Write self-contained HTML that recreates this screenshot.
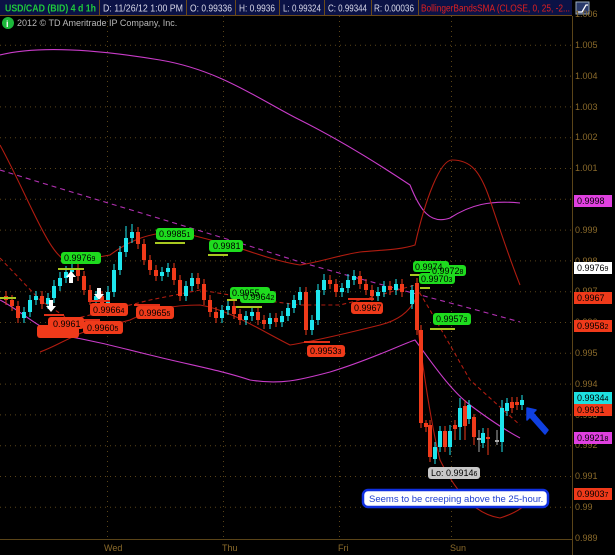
<!DOCTYPE html>
<html><head><meta charset="utf-8"><style>
html,body{margin:0;padding:0;background:#000;width:615px;height:555px;overflow:hidden}
svg{display:block;font-family:"Liberation Sans",sans-serif}
</style></head><body>
<svg width="615" height="555" xmlns="http://www.w3.org/2000/svg">
<rect width="615" height="555" fill="#000"/>
<rect x="0" y="0" width="572" height="15" fill="#0b1246"/>
<g stroke="#6b4a1a" stroke-width="1">
<line x1="99.5" y1="0" x2="99.5" y2="15"/><line x1="186.5" y1="0" x2="186.5" y2="15"/><line x1="235.5" y1="0" x2="235.5" y2="15"/><line x1="279.5" y1="0" x2="279.5" y2="15"/><line x1="324.5" y1="0" x2="324.5" y2="15"/><line x1="371.5" y1="0" x2="371.5" y2="15"/><line x1="418.5" y1="0" x2="418.5" y2="15"/>
<line x1="0" y1="15.5" x2="572" y2="15.5"/>
</g>
<g font-size="10" lengthAdjust="spacingAndGlyphs">
<text x="5" y="11.5" fill="#1ecb3c" font-weight="bold" textLength="91" lengthAdjust="spacingAndGlyphs">USD/CAD (BID) 4 d 1h</text>
<text x="103" y="11.5" fill="#d8d8e8" textLength="80" lengthAdjust="spacingAndGlyphs">D: 11/26/12 1:00 PM</text>
<text x="190" y="11.5" fill="#d8d8e8" textLength="42" lengthAdjust="spacingAndGlyphs">O: 0.99336</text>
<text x="239" y="11.5" fill="#d8d8e8" textLength="36" lengthAdjust="spacingAndGlyphs">H: 0.9936</text>
<text x="283" y="11.5" fill="#d8d8e8" textLength="38" lengthAdjust="spacingAndGlyphs">L: 0.99324</text>
<text x="328" y="11.5" fill="#d8d8e8" textLength="39" lengthAdjust="spacingAndGlyphs">C: 0.99344</text>
<text x="374" y="11.5" fill="#d8d8e8" textLength="40" lengthAdjust="spacingAndGlyphs">R: 0.00036</text>
<text x="421" y="11.5" fill="#e02020" textLength="149" lengthAdjust="spacingAndGlyphs">BollingerBandsSMA (CLOSE, 0, 25, -2...</text>
</g>
<rect x="576" y="2" width="13" height="12" fill="#2a3a6a" stroke="#9ab" stroke-width="1"/>
<path d="M578 12 L582 12 L586 5 L588 5" stroke="#fff" fill="none" stroke-width="1.3"/>
<circle cx="8" cy="23" r="6" fill="#1bb83a"/><text x="6" y="27" font-size="9" fill="#fff" font-weight="bold">i</text>
<text x="17" y="26" font-size="9" fill="#b8b8b8">2012 © TD Ameritrade IP Company, Inc.</text>
<g stroke="#5a4418" stroke-dasharray="1,4" stroke-width="1">
<line x1="0" y1="45.3" x2="572" y2="45.3"/><line x1="0" y1="76.1" x2="572" y2="76.1"/><line x1="0" y1="106.9" x2="572" y2="106.9"/><line x1="0" y1="137.7" x2="572" y2="137.7"/><line x1="0" y1="168.5" x2="572" y2="168.5"/><line x1="0" y1="199.3" x2="572" y2="199.3"/><line x1="0" y1="230.1" x2="572" y2="230.1"/><line x1="0" y1="260.9" x2="572" y2="260.9"/><line x1="0" y1="291.7" x2="572" y2="291.7"/><line x1="0" y1="322.5" x2="572" y2="322.5"/><line x1="0" y1="353.3" x2="572" y2="353.3"/><line x1="0" y1="384.1" x2="572" y2="384.1"/><line x1="0" y1="414.9" x2="572" y2="414.9"/><line x1="0" y1="445.7" x2="572" y2="445.7"/><line x1="0" y1="476.5" x2="572" y2="476.5"/><line x1="0" y1="507.3" x2="572" y2="507.3"/>
<line x1="107.5" y1="16" x2="107.5" y2="539"/><line x1="223.5" y1="16" x2="223.5" y2="539"/><line x1="339.5" y1="16" x2="339.5" y2="539"/><line x1="451.5" y1="16" x2="451.5" y2="539"/>
</g>
<g stroke="#5a4418" stroke-width="1">
<line x1="572.5" y1="16" x2="572.5" y2="555"/>
<line x1="0" y1="539.5" x2="572" y2="539.5"/>
</g>
<g font-size="9" fill="#8a6a2a">
<text x="575" y="17">1.006</text><text x="575" y="48">1.005</text><text x="575" y="79">1.004</text><text x="575" y="110">1.003</text><text x="575" y="140">1.002</text><text x="575" y="171">1.001</text><text x="575" y="202">1</text><text x="575" y="233">0.999</text><text x="575" y="264">0.998</text><text x="575" y="294">0.997</text><text x="575" y="325">0.996</text><text x="575" y="356">0.995</text><text x="575" y="387">0.994</text><text x="575" y="418">0.993</text><text x="575" y="448">0.992</text><text x="575" y="479">0.991</text><text x="575" y="510">0.99</text><text x="575" y="541">0.989</text>
<text x="104" y="551">Wed</text><text x="222" y="551">Thu</text><text x="338" y="551">Fri</text><text x="450" y="551">Sun</text>
</g>
<g fill="none" stroke-width="1.1">
<path d="M0,55 C40,45 100,50 160,60 C220,70 260,100 300,120 C340,140 380,165 410,185 C420,210 430,225 450,218 C470,205 490,200 520,203" stroke="#c93cc9"/>
<path d="M0,300 C20,310 40,330 60,335 C90,340 110,345 150,355 C190,365 220,370 250,380 C280,385 300,380 330,372 C370,360 400,345 415,340 C430,360 450,390 470,405 C490,420 505,430 520,438" stroke="#c93cc9"/>
<path d="M0,170 C80,195 200,230 300,262 C380,285 460,305 520,322" stroke="#b030b0" stroke-dasharray="5,4"/>
<path d="M0,145 C30,200 50,260 70,262 L110,255 C130,240 150,232 180,232 L230,245 C260,255 280,262 300,265 C320,262 340,255 360,252 C380,250 400,250 415,245 C425,200 440,160 452,160 C470,160 480,170 490,200 C500,230 510,260 520,285" stroke="#b01c10"/>
<path d="M40,352 C60,345 80,330 100,328 L130,320 C150,310 170,305 200,305 C230,310 260,330 290,345 C320,340 360,330 380,325 C400,320 410,310 415,300 C420,350 430,420 440,460 C460,500 480,515 500,518 C510,515 520,510 525,505" stroke="#b01c10"/>
<path d="M0,258 L40,300 L70,320 L110,310 L150,300 L200,290 L260,300 L300,305 L340,305 L380,295 L415,285 L430,310 L470,380 L520,425" stroke="#b01c10" stroke-dasharray="4,3"/>
</g>
<!-- wicks -->
<path fill="none" stroke="#1ee6ee" stroke-width="1" d="M24,307V323 M30,295V317 M36,291V305 M48,293V309 M54,280V303 M60,272V291 M66,266V283 M72,262V277 M96,291V305 M108,286V309 M114,264V297 M120,246V275 M126,226V257 M132,224V243 M162,267V281 M168,263V277 M186,281V301 M192,273V291 M222,305V323 M228,301V315 M246,311V325 M252,307V321 M270,313V329 M282,311V327 M288,303V321 M294,295V313 M300,287V305 M312,315V335 M318,284V325 M324,274V295 M342,283V297 M348,274V293 M354,270V285 M378,287V301 M384,281V297 M396,279V295 M412,285V309 M435,442V464 M440,426V452 M450,425V455 M460,398V440 M469,400V424 M483,428V448 M502,400V452 M507,398V416 M522,395V410"/>
<path fill="none" stroke="#f03a1a" stroke-width="1" d="M6,291V305 M12,295V311 M18,301V323 M42,291V309 M78,263V281 M84,271V295 M90,285V305 M102,291V309 M138,227V249 M144,239V265 M150,255V275 M156,265V281 M174,263V285 M180,275V301 M198,273V289 M204,279V305 M210,295V317 M216,307V323 M234,301V319 M240,309V325 M258,307V325 M264,315V329 M276,313V327 M306,287V335 M330,275V289 M336,279V297 M360,271V289 M366,279V295 M372,285V301 M390,281V295 M402,279V297 M417,278V335 M421,325V428 M426,420V432 M430,420V462 M445,426V452 M455,420V440 M465,400V440 M474,414V445 M488,428V455 M512,397V413 M517,397V410"/>
<path fill="none" stroke="#aaa" stroke-width="1" d="M479,430V452 M497,430V445"/>
<g fill="#1ee6ee">
<rect x="22" y="312" width="4" height="6"/><rect x="28" y="300" width="4" height="12"/><rect x="34" y="296" width="4" height="4"/><rect x="46" y="298" width="4" height="6"/><rect x="52" y="286" width="4" height="12"/><rect x="58" y="278" width="4" height="8"/><rect x="64" y="272" width="4" height="6"/><rect x="70" y="268" width="4" height="4"/><rect x="94" y="296" width="4" height="4"/><rect x="106" y="292" width="4" height="12"/><rect x="112" y="270" width="4" height="22"/><rect x="118" y="252" width="4" height="18"/><rect x="124" y="238" width="4" height="14"/><rect x="130" y="232" width="4" height="6"/><rect x="160" y="272" width="4" height="4"/><rect x="166" y="268" width="4" height="4"/><rect x="184" y="286" width="4" height="10"/><rect x="190" y="278" width="4" height="8"/><rect x="220" y="310" width="4" height="8"/><rect x="226" y="306" width="4" height="4"/><rect x="244" y="316" width="4" height="4"/><rect x="250" y="312" width="4" height="4"/><rect x="268" y="318" width="4" height="6"/><rect x="280" y="316" width="4" height="6"/><rect x="286" y="308" width="4" height="8"/><rect x="292" y="300" width="4" height="8"/><rect x="298" y="292" width="4" height="8"/><rect x="310" y="320" width="4" height="10"/><rect x="316" y="290" width="4" height="30"/><rect x="322" y="280" width="4" height="10"/><rect x="340" y="288" width="4" height="4"/><rect x="346" y="280" width="4" height="8"/><rect x="352" y="276" width="4" height="4"/><rect x="376" y="292" width="4" height="4"/><rect x="382" y="286" width="4" height="6"/><rect x="394" y="284" width="4" height="6"/><rect x="410" y="290" width="4" height="14"/><rect x="433" y="447" width="4" height="12"/><rect x="438" y="431" width="4" height="16"/><rect x="448" y="431" width="4" height="16"/><rect x="458" y="408" width="4" height="19"/><rect x="467" y="405" width="4" height="14"/><rect x="481" y="433" width="4" height="10"/><rect x="500" y="408" width="4" height="34"/><rect x="505" y="403" width="4" height="8"/><rect x="520" y="400" width="4" height="5"/>
</g>
<g fill="#f03a1a">
<rect x="4" y="296" width="4" height="4"/><rect x="10" y="300" width="4" height="6"/><rect x="16" y="306" width="4" height="12"/><rect x="40" y="296" width="4" height="8"/><rect x="76" y="268" width="4" height="8"/><rect x="82" y="276" width="4" height="14"/><rect x="88" y="290" width="4" height="10"/><rect x="100" y="296" width="4" height="8"/><rect x="136" y="232" width="4" height="12"/><rect x="142" y="244" width="4" height="16"/><rect x="148" y="260" width="4" height="10"/><rect x="154" y="270" width="4" height="6"/><rect x="172" y="268" width="4" height="12"/><rect x="178" y="280" width="4" height="16"/><rect x="196" y="278" width="4" height="6"/><rect x="202" y="284" width="4" height="16"/><rect x="208" y="300" width="4" height="12"/><rect x="214" y="312" width="4" height="6"/><rect x="232" y="306" width="4" height="8"/><rect x="238" y="314" width="4" height="6"/><rect x="256" y="312" width="4" height="8"/><rect x="262" y="320" width="4" height="4"/><rect x="274" y="318" width="4" height="4"/><rect x="304" y="292" width="4" height="38"/><rect x="328" y="280" width="4" height="4"/><rect x="334" y="284" width="4" height="8"/><rect x="358" y="276" width="4" height="8"/><rect x="364" y="284" width="4" height="6"/><rect x="370" y="290" width="4" height="6"/><rect x="388" y="286" width="4" height="4"/><rect x="400" y="284" width="4" height="8"/><rect x="415" y="283" width="4" height="47"/><rect x="419" y="330" width="4" height="93"/><rect x="424" y="423" width="4" height="4"/><rect x="428" y="425" width="4" height="32"/><rect x="443" y="431" width="4" height="16"/><rect x="453" y="425" width="4" height="4"/><rect x="463" y="406" width="4" height="20"/><rect x="472" y="417" width="4" height="20"/><rect x="486" y="437" width="4" height="2"/><rect x="510" y="402" width="4" height="6"/><rect x="515" y="402" width="4" height="3"/>
</g>
<g fill="#aaa"><rect x="477" y="438" width="4" height="2"/><rect x="495" y="440" width="4" height="2"/></g>
<g stroke-width="2">
<line x1="0" y1="298" x2="16" y2="298" stroke="#a8c820"/>
<line x1="58" y1="269" x2="84" y2="269" stroke="#a8c820"/>
<line x1="155" y1="243" x2="185" y2="243" stroke="#a8c820"/>
<line x1="208" y1="255" x2="228" y2="255" stroke="#a8c820"/>
<line x1="227" y1="300" x2="237" y2="300" stroke="#a8c820"/>
<line x1="236" y1="307" x2="262" y2="307" stroke="#a8c820"/>
<line x1="410" y1="275" x2="420" y2="275" stroke="#a8c820"/>
<line x1="420" y1="288" x2="430" y2="288" stroke="#a8c820"/>
<line x1="430" y1="329" x2="455" y2="329" stroke="#a8c820"/>
<line x1="44" y1="315" x2="64" y2="315" stroke="#e03018"/>
<line x1="80" y1="320" x2="100" y2="320" stroke="#e03018"/>
<line x1="88" y1="301" x2="110" y2="301" stroke="#e03018"/>
<line x1="134" y1="305" x2="160" y2="305" stroke="#e03018"/>
<line x1="348" y1="299" x2="374" y2="299" stroke="#e03018"/>
<line x1="304" y1="342" x2="330" y2="342" stroke="#e03018"/>
</g>
<g font-size="9">
<g fill="#1edc1e"><rect x="61" y="252" width="40" height="12" rx="3"/><rect x="156" y="228" width="38" height="12" rx="3"/><rect x="209" y="240" width="34" height="12" rx="3"/><rect x="230" y="287" width="40" height="12" rx="3"/><rect x="240" y="291" width="36" height="12" rx="3"/><rect x="413" y="261" width="36" height="11" rx="3"/><rect x="430" y="265" width="36" height="11" rx="3"/><rect x="419" y="273" width="36" height="11" rx="3"/><rect x="433" y="313" width="38" height="12" rx="3"/></g>
<g fill="#000"><text x="64" y="261">0.9976<tspan font-size="7">9</tspan></text><text x="159" y="237">0.9985<tspan font-size="7">1</tspan></text><text x="213" y="249">0.9981</text><text x="232" y="296">0.9955</text><text x="243" y="300">0.9964<tspan font-size="7">2</tspan></text><text x="415" y="270">0.9974</text><text x="432" y="274">0.9972<tspan font-size="7">8</tspan></text><text x="421" y="282">0.9970<tspan font-size="7">3</tspan></text><text x="436" y="322">0.9957<tspan font-size="7">3</tspan></text></g>
<g fill="#f03a1a"><rect x="37" y="325" width="42" height="13" rx="3"/><rect x="48" y="317" width="36" height="12" rx="3"/><rect x="83" y="321" width="40" height="13" rx="3"/><rect x="90" y="303" width="38" height="13" rx="3"/><rect x="136" y="306" width="38" height="13" rx="3"/><rect x="351" y="302" width="32" height="12" rx="3"/><rect x="307" y="345" width="38" height="12" rx="3"/></g>
<g fill="#000"><text x="53" y="327">0.9961</text><text x="87" y="331">0.9960<tspan font-size="7">5</tspan></text><text x="93" y="313">0.9966<tspan font-size="7">4</tspan></text><text x="139" y="316">0.9965<tspan font-size="7">5</tspan></text><text x="354" y="311">0.9967</text><text x="310" y="354">0.9953<tspan font-size="7">3</tspan></text></g>
<rect x="428" y="467" width="52" height="12" rx="3" fill="#c8c8c8"/><text x="431" y="476" fill="#000">Lo: 0.9914<tspan font-size="7">6</tspan></text>
</g>
<g fill="#fff"><path d="M49,300 h4 v6 h3 l-5,6 l-5,-6 h3z"/><path d="M97,288 h4 v6 h3 l-5,6 l-5,-6 h3z"/><path d="M69,283 h4 v-6 h3 l-5,-6 l-5,6 h3z"/></g>
<g font-size="9">
<rect x="574" y="195" width="38" height="12" fill="#e040e0"/><text x="577" y="204" fill="#000">0.9998</text>
<rect x="574" y="262" width="38" height="12" fill="#fff"/><text x="577" y="271" fill="#000">0.9976<tspan font-size="7">9</tspan></text>
<rect x="574" y="292" width="38" height="12" fill="#f03a1a"/><text x="577" y="301" fill="#000">0.9967</text>
<rect x="574" y="320" width="38" height="12" fill="#f03a1a"/><text x="577" y="329" fill="#000">0.9958<tspan font-size="7">2</tspan></text>
<rect x="574" y="392" width="38" height="12" fill="#1ee0e0"/><text x="577" y="401" fill="#000">0.9934<tspan font-size="7">4</tspan></text>
<rect x="574" y="404" width="38" height="12" fill="#f03a1a"/><text x="577" y="413" fill="#000">0.9931</text>
<rect x="574" y="432" width="38" height="12" fill="#e040e0"/><text x="577" y="441" fill="#000">0.9921<tspan font-size="7">8</tspan></text>
<rect x="574" y="488" width="38" height="12" fill="#f03a1a"/><text x="577" y="497" fill="#000">0.9903<tspan font-size="7">7</tspan></text>
</g>
<rect x="363" y="490" width="185" height="17" rx="5" fill="#fff" stroke="#1030e0" stroke-width="2.5"/>
<text x="369" y="502" font-size="9.5" fill="#2040d0">Seems to be creeping above the 25-hour.</text>
<path d="M527,408 L536,410 L533,413 L548,430 L545,434 L530,417 L527,420 Z" fill="#1040e0" stroke="#1040e0" stroke-width="1.5" stroke-linejoin="round"/>
</svg>
</body></html>
